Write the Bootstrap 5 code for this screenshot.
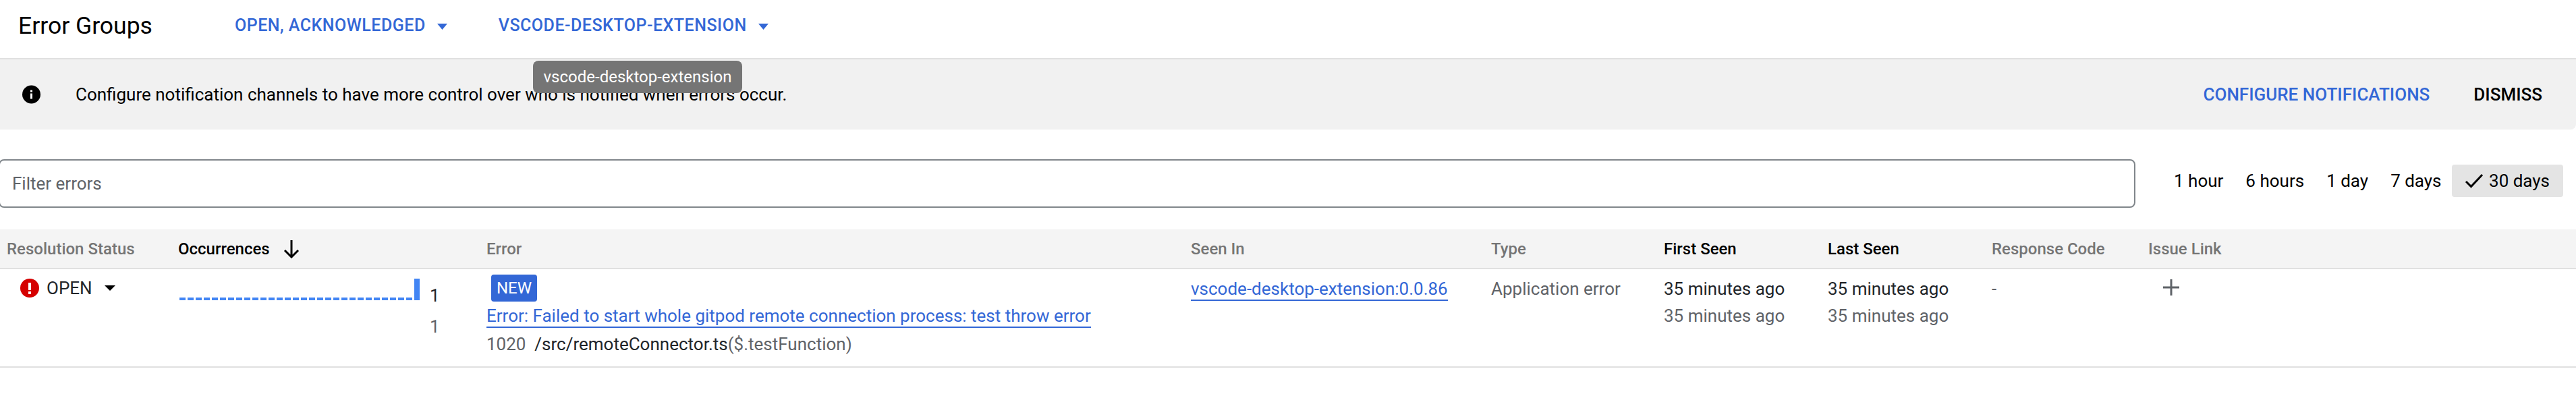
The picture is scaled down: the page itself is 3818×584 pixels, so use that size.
<!DOCTYPE html>
<html lang="en">
<head>
  <meta charset="UTF-8">
  <title>Error Groups</title>
  <link href="https://cdn.jsdelivr.net/npm/bootstrap@5.3.3/dist/css/bootstrap.min.css" rel="stylesheet">
  <style>
    body {
      font-family: Roboto, "Liberation Sans", sans-serif;
      font-size: 26px;
      color: #000;
      background: #fff;
      overflow: hidden;
    }
    a { color: #3367d6; }
    .page-head {
      height: 88px;
      border-bottom: 2px solid #e0e0e0;
      padding: 0 0 10px 27px;
    }
    .page-title {
      font-size: 35.500px;
      font-weight: 400;
      margin: 0;
      width: 321px;
      line-height: 44px;
    }
    .head-btn {
      color: #3367d6;
      font-size: 25px;
      font-weight: 500;
      padding: 0;
      border: 0;
      text-transform: uppercase;
      letter-spacing: .5px;
    }
    .head-btn svg { margin-left: 17px; }
    .head-btn + .head-btn { margin-left: 76px; }
    .hint-tip {
      position: absolute;
      left: 790px;
      top: 90px;
      width: 310px;
      height: 48px;
      line-height: 48px;
      text-align: center;
      background: #757575;
      color: #fff;
      font-size: 24px;
      border-radius: 8px;
    }
    .notice {
      height: 104px;
      background: #f1f1f1;
      border-radius: 0 0 8px 0;
      padding: 0 50px 0 33px;
    }
    .notice-text { margin-left: 52px; }
    .notice-act {
      font-size: 26px;
      font-weight: 500;
      padding: 0;
      border: 0;
      text-transform: uppercase;
      color: #3367d6;
    }
    .notice-act.plain { color: #000; margin-left: 65px; }
    .filter-row {
      height: 148px;
      padding: 44px 20px 0 0;
    }
    .filter-input.form-control {
      width: 3167px;
      height: 72px;
      margin-left: -2px;
      border: 2px solid #80868b;
      border-radius: 8px;
      font-size: 26px;
      padding: 0 18px;
      color: #000;
      flex: none;
    }
    .filter-input::placeholder { color: #5f6368; opacity: 1; }
    .range-list { margin: 8px 0 0 57px; }
    .range-btn {
      font-size: 26px;
      font-weight: 400;
      color: #000;
      padding: 0;
      border: 0;
      height: 48px;
      margin-right: 33px;
      border-radius: 4px;
      white-space: nowrap;
    }
    .range-btn.active-range,
    .range-btn.active-range:active {
      background: #e4e4e4;
      color: #000;
      margin: 0 0 0 -18px;
      width: 165px;
      border-radius: 4px;
    }
    .errors-table {
      table-layout: fixed;
      width: 3818px;
      margin: 0;
      font-size: 26px;
    }
    .errors-table th, .errors-table td {
      padding-left: 0;
      padding-right: 0;
      border-bottom: 2px solid #e0e0e0;
    }
    .errors-table th {
      background: #f4f4f4;
      height: 58px;
      font-size: 24px;
      font-weight: 500;
      color: #757575;
      padding-top: 0;
      padding-bottom: 0;
      vertical-align: middle;
    }
    .errors-table th.sorted { color: #000; }
    .errors-table td {
      height: 146px;
      vertical-align: top;
      padding-top: 9px;
      padding-bottom: 0;
      line-height: 40px;
    }
    .status-label { padding-left: 10px; }
    .sort-arrow { margin-left: 20px; vertical-align: -6px; }
    .status-cell { padding-left: 30px !important; }
    .status-open { height: 38px; }
    .status-open svg:first-child { margin-right: 11px; }
    .status-open svg:last-child { margin-left: 18px; }
    .spark {
      width: 356px;
      height: 32px;
      margin: 5px 0 0 2px;
      flex: none;
    }
    .spark-bar { width: 9px; height: 4px; background: #4285f4; }
    .spark-bar.top { width: 8px; height: 32px; }
    .count-col { margin-left: 15px; padding-top: 10px; }
    .count-prev { margin-top: 6px; }
    .muted-text { color: #5f6368; }
    .new-tag {
      display: block;
      width: 68px;
      height: 40px;
      line-height: 40px;
      margin: -1px 0 1px 7px;
      text-align: center;
      background: #3367d6;
      color: #fff;
      font-size: 24px;
      border-radius: 4px;
    }
    .row-link {
      color: #3367d6;
      text-decoration: none;
      border-bottom: 2px solid #3367d6;
      padding-bottom: 1px;
    }
    .stack-line { margin-top: 2px; }
    .plus-btn { display: block; margin: 5px 0 0 21px; }
  </style>
</head>
<body>

<div class="page-head d-flex align-items-center">
  <h1 class="page-title">Error Groups</h1>
  <button class="btn head-btn" type="button">Open, Acknowledged<svg width="15" height="9" viewBox="0 0 15 9"><path d="M0 0h15L7.500 9z" fill="#3367d6"/></svg></button>
  <button class="btn head-btn" type="button">vscode-desktop-extension<svg width="15" height="9" viewBox="0 0 15 9"><path d="M0 0h15L7.500 9z" fill="#3367d6"/></svg></button>
</div>

<div class="hint-tip">vscode-desktop-extension</div>

<div class="notice d-flex align-items-center">
  <svg width="27" height="28" viewBox="0 0 27 28">
    <circle cx="13.500" cy="14" r="13.500" fill="#000"/>
    <rect x="12" y="12.500" width="3" height="8" fill="#fff"/>
    <rect x="12" y="7.500" width="3" height="3" fill="#fff"/>
  </svg>
  <span class="notice-text">Configure notification channels to have more control over who is notified when errors occur.</span>
  <button class="btn notice-act ms-auto" type="button">Configure notifications</button>
  <button class="btn notice-act plain" type="button">Dismiss</button>
</div>

<div class="filter-row d-flex align-items-start">
  <input class="form-control filter-input" type="text" placeholder="Filter errors">
  <div class="range-list d-flex align-items-center">
    <button class="btn range-btn" type="button">1 hour</button>
    <button class="btn range-btn" type="button">6 hours</button>
    <button class="btn range-btn" type="button">1 day</button>
    <button class="btn range-btn" type="button">7 days</button>
    <button class="btn range-btn active-range d-flex align-items-center justify-content-center gap-2" type="button">
      <svg width="28" height="22" viewBox="0 0 28 22"><path d="M2 12l7.500 7.500L26 2" fill="none" stroke="#000" stroke-width="3"/></svg>
      30 days
    </button>
  </div>
</div>

<table class="table errors-table">
  <colgroup>
    <col style="width:264px"><col style="width:457px"><col style="width:1044px"><col style="width:445px">
    <col style="width:256px"><col style="width:243px"><col style="width:243px"><col style="width:232px"><col>
  </colgroup>
  <thead>
    <tr>
      <th><span class="status-label">Resolution Status</span></th>
      <th class="sorted">Occurrences<svg class="sort-arrow" width="24" height="28" viewBox="0 0 24 28"><path d="M12 1v25M2 16l10 10 10-10" fill="none" stroke="#000" stroke-width="3"/></svg></th>
      <th>Error</th>
      <th>Seen In</th>
      <th>Type</th>
      <th class="sorted">First Seen</th>
      <th class="sorted">Last Seen</th>
      <th>Response Code</th>
      <th>Issue Link</th>
    </tr>
  </thead>
  <tbody>
    <tr>
      <td class="status-cell">
        <div class="status-open d-flex align-items-center">
          <svg width="28" height="28" viewBox="0 0 28 28">
            <circle cx="14" cy="14" r="14" fill="#d50000"/>
            <rect x="12" y="6" width="4" height="11" fill="#fff"/>
            <rect x="12" y="19" width="4" height="4" fill="#fff"/>
          </svg>
          <span>OPEN</span>
          <svg width="16" height="8" viewBox="0 0 16 8"><path d="M0 0h16L8 8z" fill="#000"/></svg>
        </div>
      </td>
      <td>
        <div class="d-flex">
          <div class="spark d-flex justify-content-between align-items-end" id="spark"></div>
          <div class="count-col">
            <div>1</div>
            <div class="muted-text count-prev">1</div>
          </div>
        </div>
      </td>
      <td>
        <span class="new-tag">NEW</span>
        <div><a class="row-link" href="#">Error: Failed to start whole gitpod remote connection process: test throw error</a></div>
        <div class="stack-line"><span class="muted-text">1020</span>&nbsp; /src/remoteConnector.ts<span class="muted-text">($.testFunction)</span></div>
      </td>
      <td><a class="row-link" href="#">vscode-desktop-extension:0.0.86</a></td>
      <td class="muted-text">Application error</td>
      <td>35 minutes ago<div class="muted-text">35 minutes ago</div></td>
      <td>35 minutes ago<div class="muted-text">35 minutes ago</div></td>
      <td class="muted-text">-</td>
      <td>
        <svg class="plus-btn" width="26" height="26" viewBox="0 0 26 26"><path d="M13 1v24M1 13h24" stroke="#5f6368" stroke-width="3"/></svg>
      </td>
    </tr>
  </tbody>
</table>

<script src="https://cdn.jsdelivr.net/npm/bootstrap@5.3.3/dist/js/bootstrap.bundle.min.js"></script>
<script>
  // 30 day occurrence chart, only the last day has a hit
  const spark = document.getElementById("spark");
  for (let i = 0; i < 30; i++) {
    const bar = document.createElement("div");
    bar.className = i === 29 ? "spark-bar top" : "spark-bar";
    spark.appendChild(bar);
  }
</script>

</body>
</html>
